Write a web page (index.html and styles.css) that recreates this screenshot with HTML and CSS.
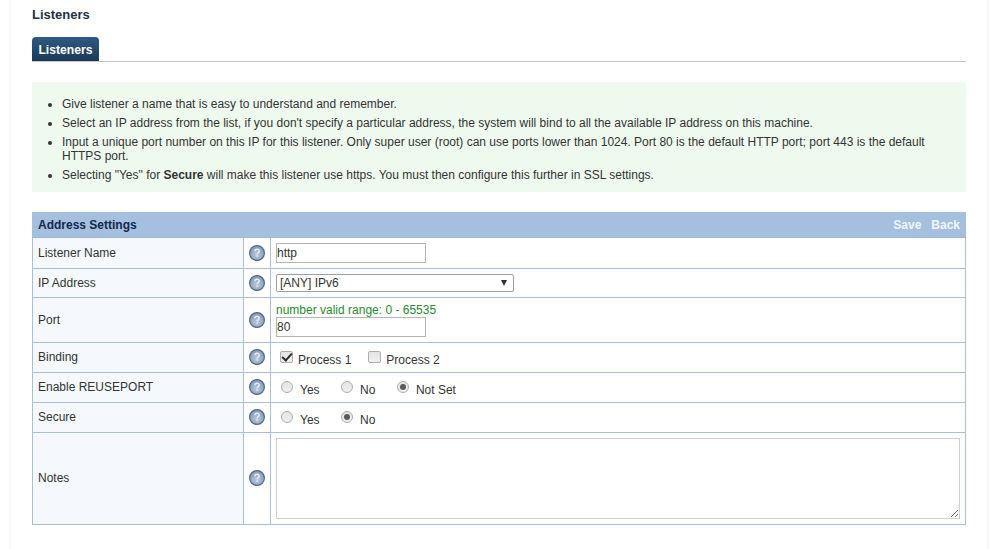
FILE: index.html
```html
<!DOCTYPE html>
<html lang="en">
<head>
<meta charset="utf-8">
<title>Listeners</title>
<link rel="stylesheet" href="styles.css">
</head>
<body>
<svg class="defs" width="0" height="0" aria-hidden="true">
  <defs>
    <radialGradient id="helpFill" cx="50%" cy="62%" r="62%">
      <stop offset="0" stop-color="#bccadc"/>
      <stop offset="1" stop-color="#7f96b6"/>
    </radialGradient>
    <symbol id="help" viewBox="0 0 16 16">
      <circle cx="8" cy="8" r="7.4" fill="url(#helpFill)" stroke="#50698c" stroke-width="1.2"/>
      <path d="M5.9 6.2c.1-1.3 1-2 2.2-2s2.1.7 2.1 1.8c0 1.6-2 1.6-2 3.2" fill="none" stroke="#e6edf5" stroke-width="1.5"/>
      <rect x="7.4" y="10.3" width="1.5" height="1.5" fill="#e6edf5"/>
    </symbol>
  </defs>
</svg>
<main class="panel">
  <h1 class="title">Listeners</h1>
  <div class="tabs"><span class="tab">Listeners</span></div>
  <section class="tips">
    <ul>
      <li>Give listener a name that is easy to understand and remember.</li>
      <li>Select an IP address from the list, if you don't specify a particular address, the system will bind to all the available IP address on this machine.</li>
      <li>Input a unique port number on this IP for this listener. Only super user (root) can use ports lower than 1024. Port 80 is the default HTTP port; port 443 is the default HTTPS port.</li>
      <li>Selecting "Yes" for <b>Secure</b> will make this listener use https. You must then configure this further in SSL settings.</li>
    </ul>
  </section>
  <table class="form">
    <colgroup><col class="c-label"><col class="c-help"><col></colgroup>
    <thead>
      <tr><th colspan="3"><div class="head"><span>Address Settings</span><span class="actions"><a>Save</a><a>Back</a></span></div></th></tr>
    </thead>
    <tbody>
      <tr class="r31">
        <td class="label">Listener Name</td>
        <td class="help"><svg class="hi"><use href="#help"/></svg></td>
        <td><input class="text" type="text" value="http"></td>
      </tr>
      <tr class="r29">
        <td class="label">IP Address</td>
        <td class="help"><svg class="hi"><use href="#help"/></svg></td>
        <td><div class="select"><span>[ANY] IPv6</span><i class="arrow"></i></div></td>
      </tr>
      <tr class="r45">
        <td class="label">Port</td>
        <td class="help"><svg class="hi"><use href="#help"/></svg></td>
        <td><div class="hint">number valid range: 0 - 65535</div><input class="text" type="text" value="80"></td>
      </tr>
      <tr class="r30">
        <td class="label">Binding</td>
        <td class="help"><svg class="hi"><use href="#help"/></svg></td>
        <td><div class="opts checks">
          <label class="opt"><input type="checkbox" checked>Process 1</label>
          <label class="opt"><input type="checkbox">Process 2</label>
        </div></td>
      </tr>
      <tr class="r30">
        <td class="label">Enable REUSEPORT</td>
        <td class="help"><svg class="hi"><use href="#help"/></svg></td>
        <td><div class="opts">
          <label class="opt"><input type="radio" name="reuse">Yes</label>
          <label class="opt"><input type="radio" name="reuse">No</label>
          <label class="opt"><input type="radio" name="reuse" checked>Not Set</label>
        </div></td>
      </tr>
      <tr class="r30">
        <td class="label">Secure</td>
        <td class="help"><svg class="hi"><use href="#help"/></svg></td>
        <td><div class="opts">
          <label class="opt"><input type="radio" name="secure">Yes</label>
          <label class="opt"><input type="radio" name="secure" checked>No</label>
        </div></td>
      </tr>
      <tr class="r92">
        <td class="label">Notes</td>
        <td class="help"><svg class="hi"><use href="#help"/></svg></td>
        <td><textarea class="notes"></textarea></td>
      </tr>
    </tbody>
  </table>
</main>
</body>
</html>
```
FILE: styles.css
```css
* { box-sizing: border-box; }
html, body { height: 100%; }
body {
  margin: 0;
  padding: 0 4px 0 10px;
  background: #fff;
  font-family: "Liberation Sans", Arial, sans-serif;
  font-size: 12px;
  color: #333;
  overflow: hidden;
}
.defs { position: absolute; }
.panel {
  background: #fff;
  height: 549px;
  padding: 8px 21px 0 21px;
  border-left: 1px solid #f6f6f6;
  border-right: 1px solid #f6f6f6;
  box-shadow: 0 0 3px #f2f2f2;
}
.title {
  margin: 0;
  font-size: 13px;
  line-height: 14px;
  font-weight: bold;
  color: #1f2f44;
}
.tabs {
  margin-top: 15px;
  height: 25px;
  border-bottom: 1px solid #c6c6c6;
  display: flex;
}
.tab {
  width: 67px;
  height: 24px;
  border-radius: 4px 4px 0 0;
  background: linear-gradient(#2f5a83, #1c3a58);
  color: #fff;
  font-weight: bold;
  font-size: 12.2px;
  line-height: 26px;
  text-align: center;
}
.tips {
  margin-top: 20px;
  background: #effaef;
  height: 110px;
  padding: 15px 30px 0 29px;
}
.tips ul { margin: 0; padding: 0 0 0 1px; list-style: disc; }
.tips li { line-height: 14px; margin-bottom: 5px; color: #333; }
.tips b { color: #333; }
.form {
  margin-top: 20px;
  width: 100%;
  table-layout: fixed;
  border-collapse: collapse;
}
.c-label { width: 211px; }
.c-help { width: 27px; }
.form th {
  padding: 0;
  height: 25px;
  background: #a4c0de;
  border: 1px solid #a4c0de;
  border-bottom-color: #9db6cf;
}
.head {
  display: flex;
  justify-content: space-between;
  padding: 0 5px;
  font-size: 12px;
  color: #12294a;
}
.actions { display: flex; gap: 10px; color: #f0f6fc; }
.form td { border: 1px solid #a9bfd6; padding: 0 5px; vertical-align: middle; }
.r31 { height: 31px; }
.r30 { height: 30px; }
.r29 { height: 29px; }
.r45 { height: 45px; }
.r92 { height: 92px; }
.form .label { background: #f5f9fd; color: #333; padding-left: 5px; }
.form .help { padding: 0; text-align: center; }
.r30 .label, .r92 .label { padding-bottom: 1px; }
.form .r30 .help, .form .r92 .help { padding-bottom: 1px; }
.hi { display: block; width: 16px; height: 16px; margin: 0 auto; }
.text {
  display: block;
  width: 150px;
  height: 20px;
  margin: 0;
  padding: 1px 0;
  border: 1px solid #b4b4b4;
  background: #fff;
  font: 12px "Liberation Sans", Arial, sans-serif;
  color: #333;
}
.select {
  width: 238px;
  height: 18px;
  border: 1px solid #a0a0a0;
  border-radius: 2px;
  padding: 0 6px 0 3px;
  display: flex;
  align-items: center;
  justify-content: space-between;
}
.arrow {
  width: 0;
  height: 0;
  border-left: 3.5px solid transparent;
  border-right: 3.5px solid transparent;
  border-top: 6px solid #333;
}
.hint { color: #1f8a2e; line-height: 14px; }
.opts { display: flex; gap: 16.5px; }
.checks { gap: 13px; }
.opt { display: flex; align-items: flex-start; padding-top: 4px; line-height: 14px; }
.opt input {
  appearance: none;
  -webkit-appearance: none;
  display: grid;
  place-items: center;
  flex: none;
  width: 12px;
  height: 12px;
  margin: -2px 7px 0 5px;
  border: 1px solid #aeaeae;
  border-radius: 50%;
  background: linear-gradient(#e4e4e4, #f0f0f0);
}
.opt input:checked::after {
  content: "";
  width: 6px;
  height: 6px;
  border-radius: 50%;
  background: #5a5a5a;
}
.checks .opt input {
  width: 13px;
  margin: -2px 5px 0 4px;
  border-radius: 2px;
}
.checks .opt input:checked::after {
  width: 8px;
  height: 4px;
  margin-top: -2px;
  border-radius: 0;
  background: none;
  border-left: 2px solid #2b2b2b;
  border-bottom: 2px solid #2b2b2b;
  transform: rotate(-48deg);
}
.notes {
  display: block;
  width: 684px;
  height: 81px;
  margin: 0;
  border: 1px solid #cfcfcf;
  background: #fff;
}
```
